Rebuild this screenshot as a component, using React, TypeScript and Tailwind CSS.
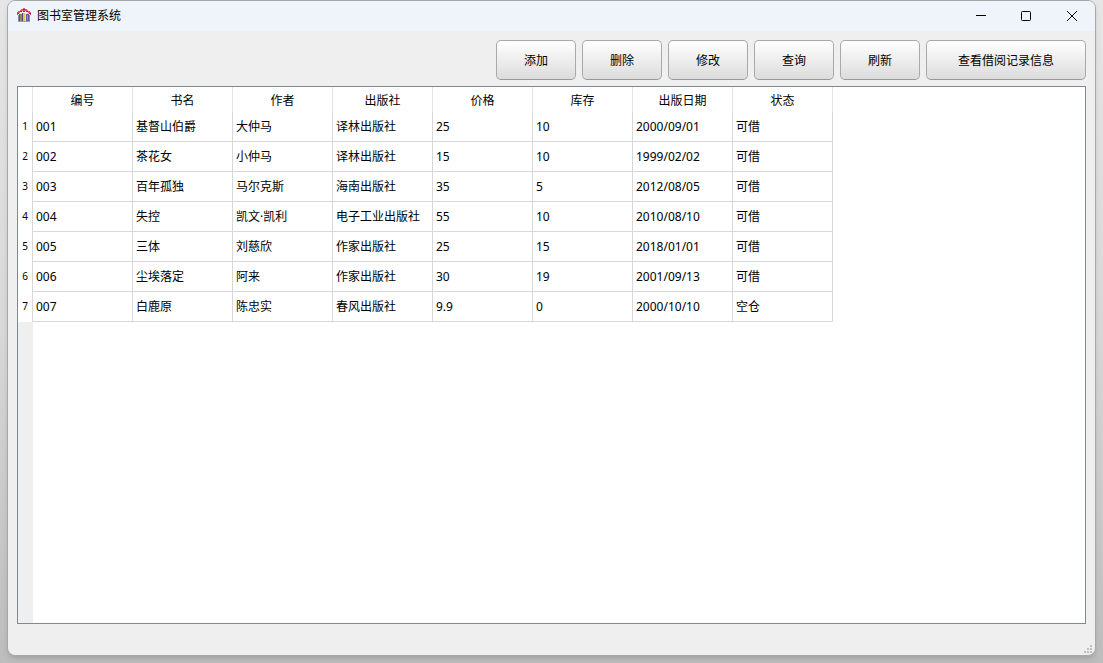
import { useState } from 'react'

interface Book {
  id: string
  name: string
  author: string
  press: string
  price: string
  stock: string
  date: string
  status: string
}

const columns: { key: keyof Book; label: string }[] = [
  { key: 'id', label: '编号' },
  { key: 'name', label: '书名' },
  { key: 'author', label: '作者' },
  { key: 'press', label: '出版社' },
  { key: 'price', label: '价格' },
  { key: 'stock', label: '库存' },
  { key: 'date', label: '出版日期' },
  { key: 'status', label: '状态' },
]

const books: Book[] = [
  { id: '001', name: '基督山伯爵', author: '大仲马', press: '译林出版社', price: '25', stock: '10', date: '2000/09/01', status: '可借' },
  { id: '002', name: '茶花女', author: '小仲马', press: '译林出版社', price: '15', stock: '10', date: '1999/02/02', status: '可借' },
  { id: '003', name: '百年孤独', author: '马尔克斯', press: '海南出版社', price: '35', stock: '5', date: '2012/08/05', status: '可借' },
  { id: '004', name: '失控', author: '凯文·凯利', press: '电子工业出版社', price: '55', stock: '10', date: '2010/08/10', status: '可借' },
  { id: '005', name: '三体', author: '刘慈欣', press: '作家出版社', price: '25', stock: '15', date: '2018/01/01', status: '可借' },
  { id: '006', name: '尘埃落定', author: '阿来', press: '作家出版社', price: '30', stock: '19', date: '2001/09/13', status: '可借' },
  { id: '007', name: '白鹿原', author: '陈忠实', press: '春风出版社', price: '9.9', stock: '0', date: '2000/10/10', status: '空仓' },
]

const actions = ['添加', '删除', '修改', '查询', '刷新']

const buttonClass =
  'h-10 rounded-[5px] border border-[#a9a9a9] border-b-[#989898] bg-linear-to-b from-white to-[#dcdcdc] pt-0.5 hover:to-[#e8e8e8] active:from-[#dcdcdc]'

function LibraryIcon() {
  return (
    <svg width="16" height="16" viewBox="0 0 16 16" aria-hidden="true">
      <path d="M3 5h10v9H3z" fill="#e4dcea" />
      <path d="M2 7h1v6H2zM13 7h1v6h-1z" fill="#8d86b0" />
      <path d="M3 6h3v7H3z" fill="#7a9a4a" />
      <path d="M3 6h1v7H3z" fill="#5a4a94" />
      <path d="M6 5h1v8H6z" fill="#51437c" />
      <path d="M7 5h2v8H7z" fill="#f5b95a" />
      <path d="M9 5h1v8H9z" fill="#eadfe0" />
      <path d="M10 6h3v7h-3z" fill="#5a5a9c" />
      <path d="M11 7h1v5h-1z" fill="#8f93cf" />
      <path d="M2 13h12v1H2z" fill="#a09ab4" />
      <path d="M7 0h2v1h2v1h1v1h2v1h1v3h-1V5h-2V4h-2V3H6v1H4v1H2v2H1V4h1V3h2V2h1V1h2z" fill="#e0566a" />
      <path d="M7 1h2v1H7zM4 3h2v1H4zM10 3h2v1h-2zM1 5h2v1H1zM13 5h2v1h-2zM7 3h2v1H7z" fill="#5f3f6e" />
    </svg>
  )
}

function TitleBar() {
  return (
    <header className="flex h-[30px] items-center bg-[#eff3fa] pl-2">
      <LibraryIcon />
      <h1 className="ml-[5px] flex-1 text-xs">图书室管理系统</h1>
      <button type="button" aria-label="最小化" className="flex h-full w-11 items-center justify-center hover:bg-black/5">
        <svg width="10" height="10" viewBox="0 0 10 10" fill="#000">
          <path d="M0 4h10v1H0z" />
        </svg>
      </button>
      <button type="button" aria-label="最大化" className="flex h-full w-[46px] items-center justify-center hover:bg-black/5">
        <svg width="10" height="10" viewBox="0 0 10 10" fill="none" stroke="#000">
          <rect x=".5" y=".5" width="9" height="9" rx="1" />
        </svg>
      </button>
      <button type="button" aria-label="关闭" className="flex h-full w-[46px] items-center justify-center hover:bg-red-600">
        <svg width="10" height="10" viewBox="0 0 10 10" stroke="#000">
          <path d="M0 0l10 10M10 0L0 10" />
        </svg>
      </button>
    </header>
  )
}

export default function App() {
  const [selected, setSelected] = useState('')

  return (
    <div className="flex h-screen bg-linear-to-b from-[#e6e6e6] via-[#d8d8d8] to-[#bdbdbd] px-[7px] pb-[7px] font-['Noto_Sans','Noto_Sans_CJK_SC',sans-serif] text-xs text-black">
      <div className="flex min-w-0 flex-1 flex-col overflow-hidden rounded-lg border border-[#a8a8a8] bg-[#efefef] shadow-md">
        <TitleBar />

        <div className="flex justify-end gap-1.5 px-[9px] pt-[9px] pb-1.5">
          {actions.map((label) => (
            <button key={label} type="button" className={`w-20 ${buttonClass}`}>
              {label}
            </button>
          ))}
          <button type="button" className={`w-40 ${buttonClass}`}>
            查看借阅记录信息
          </button>
        </div>

        <main className="mx-[9px] flex min-h-0 flex-1 flex-col overflow-auto border border-[#828790] bg-white">
          <table className="w-[815px] table-fixed border-separate border-spacing-0">
            <thead>
              <tr className="h-[25px]">
                <th aria-label="行号" className="w-[15px] border-r border-[#e5e5e5] p-0" />
                {columns.map((c) => (
                  <th key={c.key} scope="col" className="border-r border-[#e5e5e5] px-0 pt-0.5 pb-0 font-normal">
                    {c.label}
                  </th>
                ))}
              </tr>
            </thead>
            <tbody>
              {books.map((book, i) => (
                <tr key={book.id} onClick={() => setSelected(book.id)} className="h-[30px]">
                  <th scope="row" className="border-r border-[#d8d8d8] p-0 text-[10px] font-normal">
                    {i + 1}
                  </th>
                  {columns.map((c) => (
                    <td
                      key={c.key}
                      className={`border-r border-b border-[#d8d8d8] py-0 pr-0 pl-[3px] whitespace-nowrap ${
                        selected === book.id ? 'bg-[#cce8ff]' : ''
                      }`}
                    >
                      {book[c.key]}
                    </td>
                  ))}
                </tr>
              ))}
            </tbody>
          </table>
          <div className="w-[15px] flex-1 bg-[#efefef]" />
        </main>

        <footer className="flex h-[31px] items-end justify-end pr-0.5 pb-px">
          <svg width="9" height="9" viewBox="0 0 9 9" fill="#bfbfbf" aria-hidden="true">
            <path d="M6 0h2v2H6zM3 3h2v2H3zM6 3h2v2H6zM0 6h2v2H0zM3 6h2v2H3zM6 6h2v2H6z" />
          </svg>
        </footer>
      </div>
    </div>
  )
}
